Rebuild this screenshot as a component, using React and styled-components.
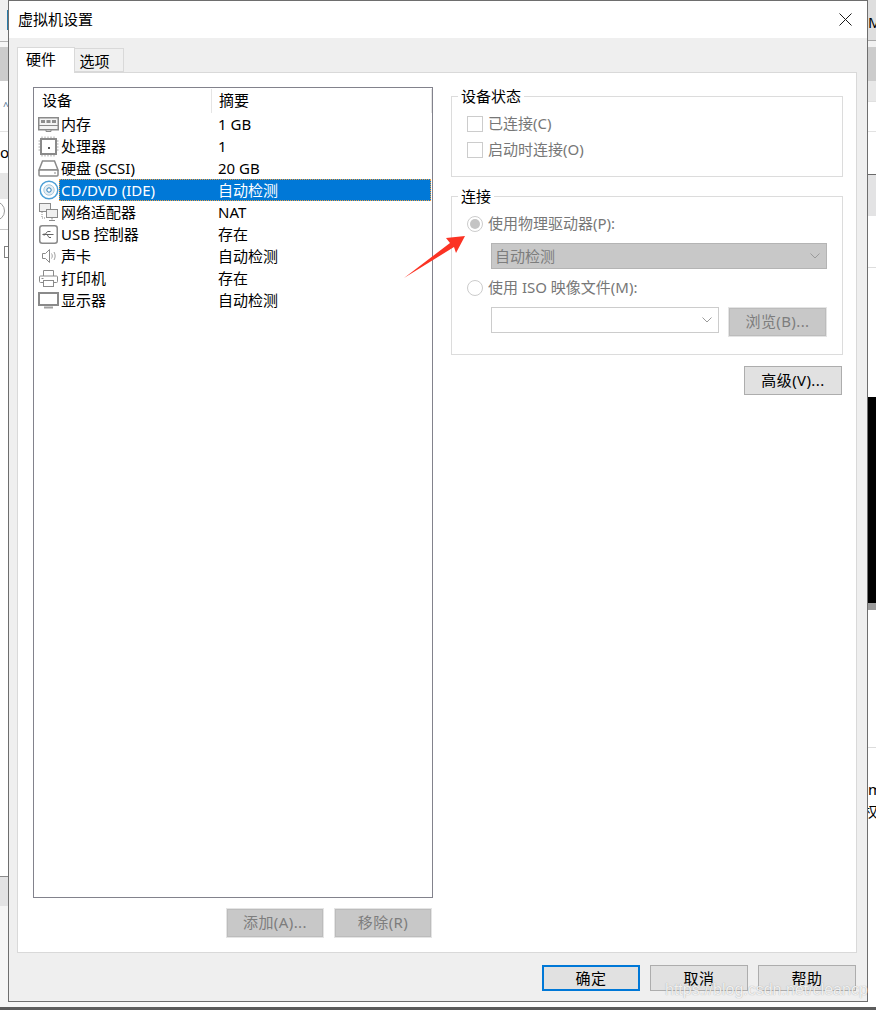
import React from "react";
import styled, { createGlobalStyle } from "styled-components";

const GlobalStyle = createGlobalStyle`
  html, body {
    margin: 0;
    padding: 0;
    background: #ffffff;
  }
  body {
    font-family: "Noto Sans", "Noto Sans CJK SC", sans-serif;
    font-size: 15px;
    color: #000000;
  }
`;

const Stage = styled.div`
  position: relative;
  width: 876px;
  height: 1010px;
  overflow: hidden;
  background: #ffffff;
`;

const Desktop = styled.div`
  display: grid;
  grid-template-columns: 8px 860px 8px;
  height: 1002px;
`;

const Strip = styled.div`
  display: flex;
  flex-direction: column;
  overflow: hidden;
  height: 1002px;
`;

const Segment = styled.div`
  flex: none;
  height: ${(p) => p.$h}px;
  background: ${(p) => p.$bg || "#ffffff"};
  border-bottom: ${(p) => (p.$line ? `1px solid ${p.$line}` : "none")};
  border-right: ${(p) => (p.$edge ? `1px solid ${p.$edge}` : "none")};
  box-sizing: border-box;
  overflow: hidden;
  white-space: nowrap;
  font-size: 15px;
  line-height: ${(p) => p.$h}px;
`;

const Ring = styled.div`
  box-sizing: border-box;
  width: 20px;
  height: 20px;
  margin: 2px 0 0 -15px;
  border: 1px solid #9a9a9a;
  border-radius: 50%;
`;

const Square = styled.div`
  box-sizing: border-box;
  width: 12px;
  height: 12px;
  margin: 16px 0 0 4px;
  border: 1px solid #808080;
`;

const Caret = styled.div`
  margin-left: 3px;
  font-size: 10px;
  color: #4a6f90;
`;

const ClippedGlyph = styled.div`
  margin-left: -5px;
`;

const Under = styled.div`
  height: 5px;
  background: linear-gradient(to right, #f5f5f5 160px, #ffffff 160px);
`;

const UnderBar = styled.div`
  height: 3px;
  background: #5c5c5c;
`;

const Dialog = styled.div`
  box-sizing: border-box;
  display: flex;
  flex-direction: column;
  width: 860px;
  height: 1002px;
  border: 1px solid #6e6e6e;
  background: #efefef;
`;

const TitleBar = styled.div`
  display: flex;
  align-items: center;
  justify-content: space-between;
  flex: none;
  height: 37px;
  padding: 0 15px 0 9px;
  background: #ffffff;
`;

const Title = styled.div`
  padding-bottom: 2px;
  font-size: 15px;
`;

const Content = styled.div`
  display: flex;
  flex-direction: column;
  flex: 1;
  padding: 9px 10px 0 8px;
  min-height: 0;
`;

const Tabs = styled.div`
  display: flex;
  align-items: flex-end;
  flex: none;
  height: 25px;
`;

const Tab = styled.div`
  box-sizing: border-box;
  display: flex;
  align-items: center;
  justify-content: center;
  position: relative;
  z-index: 1;
  width: ${(p) => (p.$active ? 58 : 49)}px;
  height: ${(p) => (p.$active ? 26 : 24)}px;
  margin-bottom: ${(p) => (p.$active ? -1 : 0)}px;
  padding-right: ${(p) => (p.$active ? 10 : 9)}px;
  padding-bottom: ${(p) => (p.$active ? 4 : 0)}px;
  background: ${(p) => (p.$active ? "#ffffff" : "#f0f0f0")};
  border: 1px solid #d9d9d9;
  border-bottom: ${(p) => (p.$active ? "none" : "1px solid #d9d9d9")};
  border-left: ${(p) => (p.$active ? "1px solid #d9d9d9" : "none")};
`;

const Panel = styled.div`
  box-sizing: border-box;
  display: grid;
  grid-template-columns: 400px 392px;
  column-gap: 18px;
  flex: none;
  height: 881px;
  padding: 14px 0 0 15px;
  background: #ffffff;
  border: 1px solid #d9d9d9;
`;

const LeftColumn = styled.div`
  display: flex;
  flex-direction: column;
`;

const DeviceList = styled.div`
  box-sizing: border-box;
  width: 400px;
  height: 811px;
  border: 1px solid #82828c;
  background: #ffffff;
`;

const ListHeader = styled.div`
  display: grid;
  grid-template-columns: 178px 220px;
  height: 25px;
`;

const HeaderCell = styled.div`
  box-sizing: border-box;
  height: 24px;
  margin-top: 1px;
  padding-left: ${(p) => p.$pad}px;
  border-right: 1px solid #e5e5e5;
  line-height: 22px;
`;

const Row = styled.div`
  display: flex;
  height: 22px;
`;

const IconCell = styled.div`
  display: flex;
  align-items: center;
  justify-content: center;
  flex: none;
  width: 25px;
  padding-left: 4px;
  box-sizing: border-box;
`;

const RowCells = styled.div`
  box-sizing: border-box;
  display: grid;
  grid-template-columns: 153px 1fr;
  width: 372px;
  line-height: 22px;
  color: ${(p) => (p.$selected ? "#ffffff" : "#000000")};
  background: ${(p) => (p.$selected ? "#0078d7" : "transparent")};
  outline: ${(p) => (p.$selected ? "1px dotted #f0a040" : "none")};
  outline-offset: -1px;
`;

const RowName = styled.div`
  padding-left: 2px;
`;

const RowValue = styled.div`
  padding-left: 6px;
`;

const ListActions = styled.div`
  display: flex;
  justify-content: flex-end;
  gap: 10px;
  margin: 10px 1px 0 0;
`;

const Button = styled.button`
  box-sizing: border-box;
  width: 98px;
  height: ${(p) => p.$h || 26}px;
  padding: 0 0 2px;
  font-family: inherit;
  font-size: 15px;
  letter-spacing: 0.4px;
  color: #000000;
  background: #e1e1e1;
  border: ${(p) => (p.$primary ? "2px solid #0078d7" : "1px solid #adadad")};
  border-radius: 0;
`;

const DisabledButton = styled(Button)`
  height: ${(p) => p.$h || 30}px;
  width: ${(p) => p.$w || 98}px;
  padding-bottom: 3px;
  color: #7d7d7d;
  background: #c8c8c8;
  border: 1px solid #e4e4e4;
  box-shadow: inset 0 0 0 1px #bcbcbc;
`;

const RightColumn = styled.div`
  display: flex;
  flex-direction: column;
  margin-top: -1px;
`;

const Group = styled.fieldset`
  box-sizing: border-box;
  display: flex;
  flex-direction: column;
  min-width: 0;
  height: ${(p) => p.$h}px;
  margin: 0 0 9px;
  padding: 7px 15px 0;
  border: 1px solid #dcdcdc;
`;

const GroupTitle = styled.legend`
  height: 20px;
  margin-left: -9px;
  padding: 0 3px;
  font-size: 15px;
  line-height: 20px;
`;

const OptionRow = styled.div`
  display: flex;
  align-items: center;
  gap: 5px;
  height: 22px;
  margin-bottom: ${(p) => p.$mb || 0}px;
  color: #777777;
`;

const OptionText = styled.span`
  padding-bottom: 3px;
`;

const CheckBox = styled.span`
  box-sizing: border-box;
  width: 16px;
  height: 16px;
  border: 1px solid #cccccc;
  background: #ffffff;
`;

const Radio = styled.span`
  box-sizing: border-box;
  display: flex;
  align-items: center;
  justify-content: center;
  width: 16px;
  height: 16px;
  border: 1px solid #cccccc;
  border-radius: 50%;
  background: #ffffff;

  &::after {
    content: "";
    display: ${(p) => (p.$checked ? "block" : "none")};
    width: 10px;
    height: 10px;
    border-radius: 50%;
    background: #c4c4c4;
  }
`;

const Indented = styled.div`
  display: flex;
  justify-content: space-between;
  margin-left: 24px;
  margin-bottom: ${(p) => p.$mb || 0}px;
`;

const Select = styled.div`
  box-sizing: border-box;
  display: flex;
  align-items: center;
  justify-content: space-between;
  width: ${(p) => p.$w}px;
  height: 26px;
  padding: 0 4px 0 3px;
  color: #7d7d7d;
  background: ${(p) => (p.$filled ? "#c8c8c8" : "#ffffff")};
  border: 1px solid ${(p) => (p.$filled ? "#b4b4b4" : "#cccccc")};
`;

const SelectText = styled.span`
  padding-bottom: 2px;
`;

const AdvancedRow = styled.div`
  display: flex;
  justify-content: flex-end;
  margin: 2px 1px 0 0;
`;

const Footer = styled.div`
  display: flex;
  justify-content: flex-end;
  gap: 10px;
  flex: none;
  padding: 12px 1px 0 0;
`;

const ArrowMark = styled.svg`
  position: absolute;
  left: 400px;
  top: 232px;
`;

const Watermark = styled.div`
  position: absolute;
  left: 665px;
  top: 981px;
  font-family: "Liberation Sans", sans-serif;
  font-size: 16px;
  color: rgba(255, 255, 255, 0.85);
  text-shadow: 0 0 1px rgba(100, 100, 100, 0.6);
  white-space: nowrap;
`;

const Glyph = styled.svg`
  display: block;
  fill: none;
  stroke: #8a8a8a;
  stroke-width: 1;
`;

const MemoryIcon = () => (
  <Glyph width="21" height="15" viewBox="0 0 21 15">
    <rect x="0.75" y="0.75" width="19.5" height="12" strokeWidth="1.5" fill="#f4f4f4" />
    <rect x="3" y="3" width="4" height="3" fill="#8e8e8e" stroke="none" />
    <rect x="8.500" y="3" width="4" height="3" fill="#8e8e8e" stroke="none" />
    <rect x="14" y="3" width="4" height="3" fill="#8e8e8e" stroke="none" />
    <path d="M1 8.500h19M8 13v1.500h5V13" />
  </Glyph>
);

const CpuIcon = () => (
  <Glyph width="21" height="21" viewBox="0 0 21 21">
    <rect x="3" y="3" width="15" height="15" fill="#ffffff" strokeWidth="2" />
    <path d="M4 0.500v1.500M7 0.500v1.500M10 0.500v1.500M13 0.500v1.500M16 0.500v1.500M4 19v1.500M7 19v1.500M10 19v1.500M13 19v1.500M16 19v1.500M0.500 5H2M0.500 8H2M0.500 11H2M0.500 14H2M19 5h1.500M19 8h1.500M19 11h1.500M19 14h1.500" stroke="#a5a5a5" />
    <rect x="10" y="11" width="2" height="2" fill="#555555" stroke="none" />
  </Glyph>
);

const DiskIcon = () => (
  <Glyph width="21" height="17" viewBox="0 0 21 17">
    <path d="M4.500 1h12l3.500 9H1z" fill="#ffffff" strokeWidth="1.500" />
    <rect x="1" y="10" width="19" height="6" rx="1" fill="#ffffff" strokeWidth="1.500" />
    <rect x="16" y="12.500" width="2" height="1" fill="#8a8a8a" stroke="none" />
  </Glyph>
);

const DiscIcon = () => (
  <Glyph width="20" height="20" viewBox="0 0 20 20">
    <circle cx="10" cy="10" r="8.800" stroke="#4d9fd6" strokeWidth="1.500" fill="#ffffff" />
    <circle cx="10" cy="10" r="5.200" stroke="#a8c8dc" fill="#e6eef4" />
    <circle cx="10" cy="10" r="2.200" stroke="#2e7fb8" fill="#ffffff" />
  </Glyph>
);

const NetworkIcon = () => (
  <Glyph width="21" height="19" viewBox="0 0 21 19">
    <rect x="1.500" y="0.500" width="11" height="8" fill="#f0f0f0" />
    <rect x="8.500" y="6.500" width="11" height="8" fill="#f0f0f0" />
    <path d="M14 14.500v2M11 17.500h6" />
    <path d="M4 9v6h3" strokeDasharray="1 1" />
  </Glyph>
);

const UsbIcon = () => (
  <Glyph width="19" height="19" viewBox="0 0 19 19">
    <rect x="0.750" y="0.750" width="17.500" height="17.500" rx="2.500" strokeWidth="1.500" />
    <path d="M3.500 9.500h11M6 9.500l2.500-3h3M8 9.500l2 3h2" stroke="#666666" />
    <path d="M3.500 9.500l2-1.500v3z" fill="#666666" stroke="none" />
  </Glyph>
);

const SpeakerIcon = () => (
  <Glyph width="16" height="16" viewBox="0 0 16 16">
    <path d="M1.500 5.500h3l4-4v13l-4-4h-3z" fill="#ffffff" />
    <path d="M10.500 5.500c1 1.500 1 3.500 0 5M13 4c1.500 2.500 1.500 5.500 0 8" stroke="#a0a0a0" />
  </Glyph>
);

const PrinterIcon = () => (
  <Glyph width="19" height="17" viewBox="0 0 19 17">
    <path d="M4.500 6V0.500h10V6" />
    <path d="M4 12.500H1.500A1 1 0 0 1 0.500 11.500V7A1 1 0 0 1 1.500 6H17.500A1 1 0 0 1 18.500 7V11.500A1 1 0 0 1 17.500 12.500H15" />
    <rect x="4.500" y="10.500" width="10" height="6" fill="#ffffff" />
    <path d="M2.500 8.500h2" />
  </Glyph>
);

const MonitorIcon = () => (
  <Glyph width="21" height="17" viewBox="0 0 21 17">
    <rect x="1" y="1" width="19" height="12" strokeWidth="2" fill="#ffffff" />
    <path d="M6 15.500h9" strokeWidth="2" stroke="#a0a0a0" />
  </Glyph>
);

const Chevron = () => (
  <svg width="14" height="8" viewBox="0 0 14 8" fill="none" stroke="#9a9a9a" strokeWidth="1">
    <path d="M2.500 1.500L7 6l4.500-4.500" />
  </svg>
);

const devices = [
  { icon: <MemoryIcon />, name: "内存", value: "1 GB" },
  { icon: <CpuIcon />, name: "处理器", value: "1" },
  { icon: <DiskIcon />, name: "硬盘 (SCSI)", value: "20 GB" },
  { icon: <DiscIcon />, name: "CD/DVD (IDE)", value: "自动检测", selected: true },
  { icon: <NetworkIcon />, name: "网络适配器", value: "NAT" },
  { icon: <UsbIcon />, name: "USB 控制器", value: "存在" },
  { icon: <SpeakerIcon />, name: "声卡", value: "自动检测" },
  { icon: <PrinterIcon />, name: "打印机", value: "存在" },
  { icon: <MonitorIcon />, name: "显示器", value: "自动检测" },
];

const App = () => {
  return (
    <Stage>
      <GlobalStyle />
      <Desktop>
        <Strip>
          <Segment $h={10} $bg="#f0f0f0" />
          <Segment $h={20} $bg="#f0f0f0" $edge="#2a7ba8" />
          <Segment $h={12} $bg="#f6f6f6" $line="#b4b4b4" />
          <Segment $h={5} $bg="#f6f6f6" />
          <Segment $h={34} $bg="#cccccc" />
          <Segment $h={51} $line="#e2e2e2">
            <Caret>^</Caret>
          </Segment>
          <Segment $h={41}>or</Segment>
          <Segment $h={26} $bg="#e6e6e6" />
          <Segment $h={31} $line="#c8c8c8">
            <Ring />
          </Segment>
          <Segment $h={35}>
            <Square />
          </Segment>
          <Segment $h={612} $line="#8a8a8a" />
          <Segment $h={29} $bg="#e3e3e4" />
          <Segment $h={96} $bg="#f5f5f5" />
        </Strip>

        <Dialog>
          <TitleBar>
            <Title>虚拟机设置</Title>
            <svg width="13" height="13" viewBox="0 0 13 13" stroke="#1a1a1a" strokeWidth="1">
              <path d="M0.500 0.500l12 12M12.500 0.500l-12 12" />
            </svg>
          </TitleBar>

          <Content>
            <Tabs>
              <Tab $active>硬件</Tab>
              <Tab>选项</Tab>
            </Tabs>
            <Panel>
              <LeftColumn>
                <DeviceList>
                  <ListHeader>
                    <HeaderCell $pad={8}>设备</HeaderCell>
                    <HeaderCell $pad={7}>摘要</HeaderCell>
                  </ListHeader>
                  {devices.map((d) => (
                    <Row key={d.name}>
                      <IconCell>{d.icon}</IconCell>
                      <RowCells $selected={d.selected}>
                        <RowName>{d.name}</RowName>
                        <RowValue>{d.value}</RowValue>
                      </RowCells>
                    </Row>
                  ))}
                </DeviceList>
                <ListActions>
                  <DisabledButton>添加(A)...</DisabledButton>
                  <DisabledButton>移除(R)</DisabledButton>
                </ListActions>
              </LeftColumn>

              <RightColumn>
                <Group $h={91}>
                  <GroupTitle>设备状态</GroupTitle>
                  <OptionRow $mb={4}>
                    <CheckBox />
                    <OptionText>已连接(C)</OptionText>
                  </OptionRow>
                  <OptionRow>
                    <CheckBox />
                    <OptionText>启动时连接(O)</OptionText>
                  </OptionRow>
                </Group>

                <Group $h={169}>
                  <GroupTitle>连接</GroupTitle>
                  <OptionRow $mb={8}>
                    <Radio $checked />
                    <OptionText>使用物理驱动器(P):</OptionText>
                  </OptionRow>
                  <Indented $mb={8}>
                    <Select $filled $w={336}>
                      <SelectText>自动检测</SelectText>
                      <Chevron />
                    </Select>
                  </Indented>
                  <OptionRow $mb={8}>
                    <Radio />
                    <OptionText>使用 ISO 映像文件(M):</OptionText>
                  </OptionRow>
                  <Indented>
                    <Select $w={228}>
                      <span />
                      <Chevron />
                    </Select>
                    <DisabledButton $w={99}>浏览(B)...</DisabledButton>
                  </Indented>
                </Group>

                <AdvancedRow>
                  <Button $h={29}>高级(V)...</Button>
                </AdvancedRow>
              </RightColumn>
            </Panel>

            <Footer>
              <Button $primary>确定</Button>
              <Button>取消</Button>
              <Button>帮助</Button>
            </Footer>
          </Content>
        </Dialog>

        <Strip>
          <Segment $h={12} $bg="#dedede" />
          <Segment $h={20} $bg="#dedede">M</Segment>
          <Segment $h={9} $bg="#dedede" $line="#a8a8a8" />
          <Segment $h={6} $bg="#f2f2f2" />
          <Segment $h={34} $bg="#cccccc" />
          <Segment $h={21} $bg="#e8e8e8" $line="#e0e0e0" />
          <Segment $h={30} $line="#e2e2e2" />
          <Segment $h={43} $line="#6a6a6a" />
          <Segment $h={41} $bg="#e3e3e4" />
          <Segment $h={52} $line="#dddddd" />
          <Segment $h={129} />
          <Segment $h={206} $bg="#000000" />
          <Segment $h={7} $bg="#9a9a9a" />
          <Segment $h={138} $line="#dcdcdc" />
          <Segment $h={30} />
          <Segment $h={22}>m</Segment>
          <Segment $h={22}>
            <ClippedGlyph>权</ClippedGlyph>
          </Segment>
          <Segment $h={180} />
        </Strip>
      </Desktop>

      <Under />
      <UnderBar />

      <ArrowMark width="70" height="50" viewBox="400 232 70 50">
        <polygon points="404,278 450,243 446,238 465,236 456,253 454,247" fill="#fb3324" />
      </ArrowMark>
      <Watermark>https://blog.csdn.net/cleancp</Watermark>
    </Stage>
  );
};

export default App;
